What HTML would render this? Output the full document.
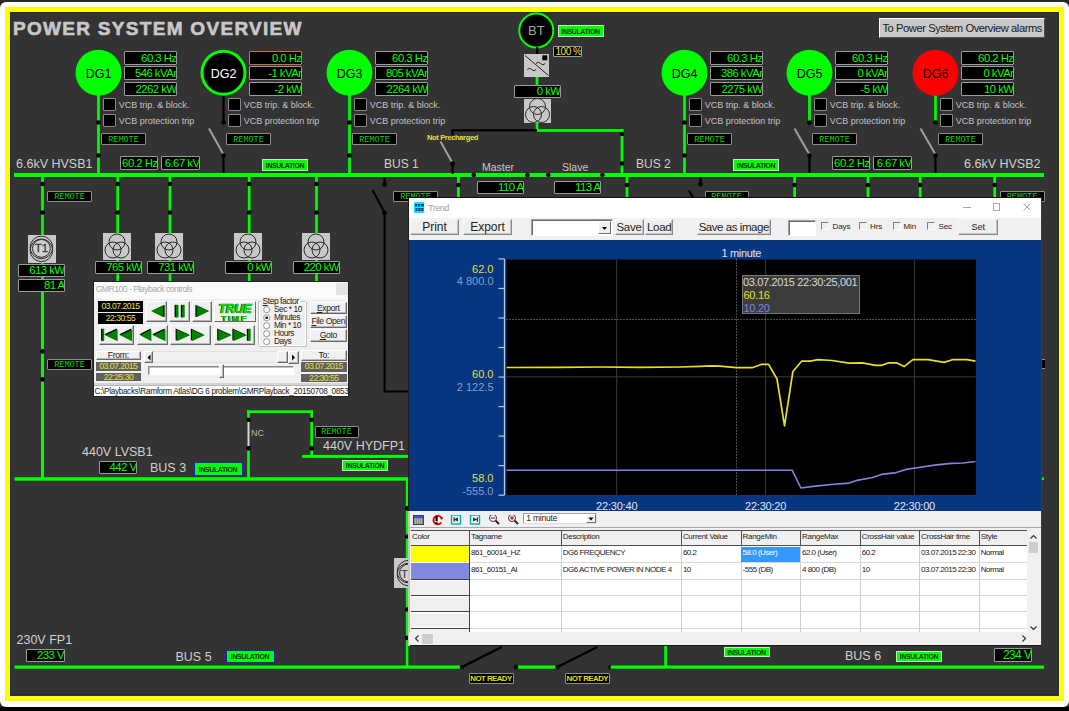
<!DOCTYPE html>
<html><head><meta charset="utf-8"><style>
*{margin:0;padding:0}
html,body{width:1069px;height:711px;overflow:hidden;background:#2a2a2a;font-family:"Liberation Sans", sans-serif}
#ov div{position:absolute;box-sizing:content-box}
#ov .vb{background:#000;border:1px solid #9a9a9a;border-radius:1px;text-align:right;overflow:hidden;white-space:pre}
#ov .rm{background:#000;border:1px solid #8c8c8c;border-radius:1px;font-family:'Liberation Mono',monospace;text-align:center;white-space:pre;overflow:hidden}
#ov .ins{background:#00ff00;border:1px solid #b8f0b8;font-size:7px;font-weight:bold;color:#1a301a;text-align:center;letter-spacing:-0.4px;white-space:pre;overflow:hidden}
</style></head><body>
<div style="position:absolute;left:0;top:707px;width:1069px;height:4px;background:#000"></div>
<div style="position:absolute;left:0;top:2px;width:1069px;height:705px;background:#fff;border-radius:6px"></div>
<div style="position:absolute;left:5.2px;top:7.2px;width:1048.7px;height:683.6px;border:5px solid #ffff00;background:#333"></div>
<div style="position:absolute;left:10.2px;top:12.2px;width:1045.8px;height:680.6px;border:1.5px solid #26263a;box-sizing:content-box"></div>
<div id="ov" style="position:absolute;left:0;top:0;width:1069px;height:711px">
<svg width="1069" height="711" style="position:absolute;left:0;top:0"><rect x="97.15" y="95" width="2.7" height="79" fill="#00ff00"/>
<circle cx="98.5" cy="122.5" r="2.3" fill="#000"/>
<circle cx="98.5" cy="155.5" r="2.3" fill="#000"/>
<circle cx="98.5" cy="72.8" r="23" fill="#00ff00"/>
<text x="98.5" y="78.1" font-size="12.5" text-anchor="middle" fill="#000" font-family="Liberation Sans">DG1</text>
<rect x="222.4" y="95" width="2.2" height="28" fill="#000"/>
<line x1="209" y1="128.5" x2="223.5" y2="154.5" stroke="#a0a0a0" stroke-width="2"/>
<rect x="222.4" y="155" width="2.2" height="19" fill="#000"/>
<circle cx="223.5" cy="122.5" r="2.3" fill="#000"/>
<circle cx="223.5" cy="155.5" r="2.3" fill="#000"/>
<circle cx="223.5" cy="72.8" r="21.5" fill="#000" stroke="#00ff00" stroke-width="3"/>
<text x="223.5" y="78.1" font-size="12.5" text-anchor="middle" fill="#fff" font-family="Liberation Sans">DG2</text>
<rect x="348.15" y="95" width="2.7" height="79" fill="#00ff00"/>
<circle cx="349.5" cy="122.5" r="2.3" fill="#000"/>
<circle cx="349.5" cy="155.5" r="2.3" fill="#000"/>
<circle cx="349.5" cy="72.8" r="23" fill="#00ff00"/>
<text x="349.5" y="78.1" font-size="12.5" text-anchor="middle" fill="#000" font-family="Liberation Sans">DG3</text>
<rect x="683.15" y="95" width="2.7" height="79" fill="#00ff00"/>
<circle cx="684.5" cy="122.5" r="2.3" fill="#000"/>
<circle cx="684.5" cy="155.5" r="2.3" fill="#000"/>
<circle cx="684.5" cy="72.8" r="23" fill="#00ff00"/>
<text x="684.5" y="78.1" font-size="12.5" text-anchor="middle" fill="#000" font-family="Liberation Sans">DG4</text>
<rect x="808.15" y="95" width="2.7" height="28" fill="#00ff00"/>
<line x1="794.5" y1="128.5" x2="809.5" y2="154.5" stroke="#a0a0a0" stroke-width="2"/>
<rect x="808.4" y="155" width="2.2" height="19" fill="#000"/>
<circle cx="809.5" cy="122.5" r="2.3" fill="#000"/>
<circle cx="809.5" cy="155.5" r="2.3" fill="#000"/>
<circle cx="809.5" cy="72.8" r="23" fill="#00ff00"/>
<text x="809.5" y="78.1" font-size="12.5" text-anchor="middle" fill="#000" font-family="Liberation Sans">DG5</text>
<rect x="934.15" y="95" width="2.7" height="28" fill="#00ff00"/>
<line x1="920.5" y1="128.5" x2="935.5" y2="154.5" stroke="#a0a0a0" stroke-width="2"/>
<rect x="934.4" y="155" width="2.2" height="19" fill="#000"/>
<circle cx="935.5" cy="122.5" r="2.3" fill="#000"/>
<circle cx="935.5" cy="155.5" r="2.3" fill="#000"/>
<circle cx="935.5" cy="72.8" r="23" fill="#ff0000"/>
<text x="935.5" y="78.1" font-size="12.5" text-anchor="middle" fill="#1a0000" font-family="Liberation Sans">DG6</text>
<rect x="14" y="173" width="1030" height="4" fill="#00ff00"/>
<circle cx="473.8" cy="175" r="2.3" fill="#000"/>
<circle cx="527.4" cy="175" r="2.3" fill="#000"/>
<circle cx="548.3" cy="175" r="2.3" fill="#000"/>
<circle cx="602.4" cy="175" r="2.3" fill="#000"/>
<circle cx="536.3" cy="30.5" r="17" fill="#000" stroke="#00ff00" stroke-width="2"/>
<text x="536.3" y="35.3" font-size="13" text-anchor="middle" fill="#a8a8a8" font-family="Liberation Sans">BT</text>
<rect x="536.0500000000001" y="47" width="2.3" height="7" fill="#000"/>
<rect x="535.65" y="76" width="2.7" height="10" fill="#00ff00"/>
<rect x="535.65" y="123" width="2.7" height="8" fill="#00ff00"/>
<rect x="537" y="129.15" width="86.5" height="2.7" fill="#00ff00"/>
<rect x="620.65" y="129" width="2.7" height="45" fill="#00ff00"/>
<circle cx="622" cy="134" r="2.3" fill="#000"/>
<circle cx="622" cy="163.5" r="2.3" fill="#000"/>
<rect x="451.5" y="129.20000000000002" width="85.5" height="2.2" fill="#000"/>
<rect x="451.4" y="129.5" width="2.2" height="5.5" fill="#000"/>
<line x1="440.5" y1="141.5" x2="452.8" y2="163.5" stroke="#a0a0a0" stroke-width="2"/>
<rect x="451.4" y="163" width="2.2" height="11" fill="#000"/>
<circle cx="452.5" cy="163.5" r="2.3" fill="#000"/>
<rect x="41.15" y="177" width="2.7" height="301" fill="#00ff00"/>
<circle cx="42.5" cy="184" r="2.3" fill="#000"/>
<circle cx="42.5" cy="212.5" r="2.3" fill="#000"/>
<rect x="116.35000000000001" y="177" width="2.7" height="104" fill="#00ff00"/>
<circle cx="117.7" cy="184" r="2.3" fill="#000"/>
<circle cx="117.7" cy="212.5" r="2.3" fill="#000"/>
<rect x="168.65" y="177" width="2.7" height="104" fill="#00ff00"/>
<circle cx="170" cy="184" r="2.3" fill="#000"/>
<circle cx="170" cy="212.5" r="2.3" fill="#000"/>
<rect x="247.85" y="177" width="2.7" height="104" fill="#00ff00"/>
<circle cx="249.2" cy="184" r="2.3" fill="#000"/>
<circle cx="249.2" cy="212.5" r="2.3" fill="#000"/>
<rect x="315.15" y="177" width="2.7" height="104" fill="#00ff00"/>
<circle cx="316.5" cy="184" r="2.3" fill="#000"/>
<circle cx="316.5" cy="212.5" r="2.3" fill="#000"/>
<rect x="41.15" y="281" width="2.7" height="197" fill="#00ff00"/>
<circle cx="42.5" cy="351.4" r="2.3" fill="#000"/>
<circle cx="42.5" cy="379.4" r="2.3" fill="#000"/>
<rect x="383.5" y="177" width="2.2" height="8" fill="#000"/>
<circle cx="384.6" cy="184.4" r="2.3" fill="#000"/>
<line x1="372.5" y1="190" x2="384.6" y2="212.7" stroke="#000" stroke-width="2"/>
<rect x="383.6" y="212.7" width="2" height="179.8" fill="#000"/>
<circle cx="384.6" cy="212.7" r="2.3" fill="#000"/>
<rect x="383.6" y="390.5" width="25.399999999999977" height="2" fill="#000"/>
<rect x="457.04999999999995" y="177" width="2.7" height="22" fill="#00ff00"/>
<circle cx="458.4" cy="185" r="2.3" fill="#000"/>
<rect x="625.65" y="177" width="2.7" height="22" fill="#00ff00"/>
<circle cx="627" cy="185" r="2.3" fill="#000"/>
<rect x="793.25" y="177" width="2.7" height="22" fill="#00ff00"/>
<circle cx="794.6" cy="185" r="2.3" fill="#000"/>
<rect x="866.65" y="177" width="2.7" height="22" fill="#00ff00"/>
<circle cx="868" cy="185" r="2.3" fill="#000"/>
<rect x="918.85" y="177" width="2.7" height="22" fill="#00ff00"/>
<circle cx="920.2" cy="185" r="2.3" fill="#000"/>
<rect x="993.35" y="177" width="2.7" height="22" fill="#00ff00"/>
<circle cx="994.7" cy="185" r="2.3" fill="#000"/>
<rect x="699.4" y="177" width="2.2" height="9" fill="#000"/>
<circle cx="700.5" cy="184.3" r="2.3" fill="#000"/>
<line x1="688.8" y1="190.5" x2="694" y2="199" stroke="#000" stroke-width="2"/>
<rect x="1040" y="477.45" width="4" height="2.7" fill="#00ff00"/>
<rect x="14.5" y="477.2" width="394" height="3.5" fill="#00ff00"/>
<rect x="247.15" y="410.5" width="2.7" height="10.5" fill="#00ff00"/>
<rect x="247.15" y="447" width="2.7" height="31" fill="#00ff00"/>
<rect x="247.5" y="422" width="2" height="24" fill="#d8d8d8"/>
<rect x="247" y="410.34999999999997" width="66" height="2.7" fill="#00ff00"/>
<rect x="310.34999999999997" y="410.5" width="2.7" height="45.5" fill="#00ff00"/>
<circle cx="248.5" cy="419.8" r="2.3" fill="#000"/>
<circle cx="248.5" cy="448.4" r="2.3" fill="#000"/>
<circle cx="311.7" cy="419.8" r="2.3" fill="#000"/>
<circle cx="311.7" cy="448.4" r="2.3" fill="#000"/>
<rect x="302" y="454.9" width="107" height="3" fill="#00ff00"/>
<rect x="405.85" y="478" width="2.5" height="190" fill="#00ff00"/>
<circle cx="407.2" cy="508.4" r="2.3" fill="#000"/>
<circle cx="407.2" cy="536.5" r="2.3" fill="#000"/>
<circle cx="407.2" cy="609.5" r="2.3" fill="#000"/>
<circle cx="407.2" cy="637.9" r="2.3" fill="#000"/>
<rect x="14.5" y="665.5" width="448" height="3.2" fill="#00ff00"/>
<circle cx="462" cy="667" r="2.3" fill="#000"/>
<line x1="462" y1="667" x2="501.8" y2="647" stroke="#000" stroke-width="2.5"/>
<rect x="516" y="665.5" width="41.5" height="3.2" fill="#00ff00"/>
<circle cx="516" cy="667" r="2.3" fill="#000"/>
<circle cx="557.4" cy="667" r="2.3" fill="#000"/>
<line x1="557.4" y1="667" x2="597.2" y2="647" stroke="#000" stroke-width="2.5"/>
<circle cx="610.6" cy="667" r="2.3" fill="#000"/>
<rect x="610.6" y="665.5" width="433.5" height="3.2" fill="#00ff00"/>
<rect x="664.25" y="646" width="2.7" height="21" fill="#00ff00"/></svg>
<div class="vb" style="left:124px;top:50.5px;width:51px;height:12px;border-color:#9a9a9a"><span style="position:absolute;right:-0.5px;top:0;line-height:12px;font-size:11.4px;color:#00ff00;letter-spacing:-0.55px">60.3 Hz</span></div>
<div class="vb" style="left:124px;top:66.3px;width:51px;height:12px;border-color:#9a9a9a"><span style="position:absolute;right:-0.5px;top:0;line-height:12px;font-size:11.4px;color:#00ff00;letter-spacing:-0.55px">546 kVAr</span></div>
<div class="vb" style="left:124px;top:82px;width:51px;height:12px;border-color:#9a9a9a"><span style="position:absolute;right:-0.5px;top:0;line-height:12px;font-size:11.4px;color:#00ff00;letter-spacing:-0.55px">2262 kW</span></div>
<div style="left:103px;top:97.6px;width:13px;height:13px;background:#000;border:1px solid #8a8a8a;box-sizing:border-box;border-radius:1px"></div>
<div style="left:103px;top:113.5px;width:13px;height:13px;background:#000;border:1px solid #8a8a8a;box-sizing:border-box;border-radius:1px"></div>
<div style="left:118.8px;top:98.5px;height:12px;line-height:12px;font-size:9px;color:#c4c4c4;white-space:pre;letter-spacing:0px">VCB trip. &amp; block.</div>
<div style="left:118.8px;top:114.5px;height:12px;line-height:12px;font-size:9px;color:#c4c4c4;white-space:pre;letter-spacing:0px">VCB protection trip</div>
<div class="rm" style="left:101px;top:133px;width:43px;height:10px;line-height:12px;color:#00d800;font-size:8.5px">REMOTE</div>
<div class="vb" style="left:249px;top:50.5px;width:51px;height:12px;border-color:#c87040"><span style="position:absolute;right:-0.5px;top:0;line-height:12px;font-size:11.4px;color:#00ff00;letter-spacing:-0.55px">0.0 Hz</span></div>
<div class="vb" style="left:249px;top:66.3px;width:51px;height:12px;border-color:#9a9a9a"><span style="position:absolute;right:-0.5px;top:0;line-height:12px;font-size:11.4px;color:#00ff00;letter-spacing:-0.55px">-1 kVAr</span></div>
<div class="vb" style="left:249px;top:82px;width:51px;height:12px;border-color:#9a9a9a"><span style="position:absolute;right:-0.5px;top:0;line-height:12px;font-size:11.4px;color:#00ff00;letter-spacing:-0.55px">-2 kW</span></div>
<div style="left:228px;top:97.6px;width:13px;height:13px;background:#000;border:1px solid #8a8a8a;box-sizing:border-box;border-radius:1px"></div>
<div style="left:228px;top:113.5px;width:13px;height:13px;background:#000;border:1px solid #8a8a8a;box-sizing:border-box;border-radius:1px"></div>
<div style="left:243.8px;top:98.5px;height:12px;line-height:12px;font-size:9px;color:#c4c4c4;white-space:pre;letter-spacing:0px">VCB trip. &amp; block.</div>
<div style="left:243.8px;top:114.5px;height:12px;line-height:12px;font-size:9px;color:#c4c4c4;white-space:pre;letter-spacing:0px">VCB protection trip</div>
<div class="rm" style="left:226px;top:133px;width:43px;height:10px;line-height:12px;color:#00d800;font-size:8.5px">REMOTE</div>
<div class="vb" style="left:375px;top:50.5px;width:51px;height:12px;border-color:#9a9a9a"><span style="position:absolute;right:-0.5px;top:0;line-height:12px;font-size:11.4px;color:#00ff00;letter-spacing:-0.55px">60.3 Hz</span></div>
<div class="vb" style="left:375px;top:66.3px;width:51px;height:12px;border-color:#9a9a9a"><span style="position:absolute;right:-0.5px;top:0;line-height:12px;font-size:11.4px;color:#00ff00;letter-spacing:-0.55px">805 kVAr</span></div>
<div class="vb" style="left:375px;top:82px;width:51px;height:12px;border-color:#9a9a9a"><span style="position:absolute;right:-0.5px;top:0;line-height:12px;font-size:11.4px;color:#00ff00;letter-spacing:-0.55px">2264 kW</span></div>
<div style="left:354px;top:97.6px;width:13px;height:13px;background:#000;border:1px solid #8a8a8a;box-sizing:border-box;border-radius:1px"></div>
<div style="left:354px;top:113.5px;width:13px;height:13px;background:#000;border:1px solid #8a8a8a;box-sizing:border-box;border-radius:1px"></div>
<div style="left:369.8px;top:98.5px;height:12px;line-height:12px;font-size:9px;color:#c4c4c4;white-space:pre;letter-spacing:0px">VCB trip. &amp; block.</div>
<div style="left:369.8px;top:114.5px;height:12px;line-height:12px;font-size:9px;color:#c4c4c4;white-space:pre;letter-spacing:0px">VCB protection trip</div>
<div class="rm" style="left:352px;top:133px;width:43px;height:10px;line-height:12px;color:#00d800;font-size:8.5px">REMOTE</div>
<div class="vb" style="left:710px;top:50.5px;width:51px;height:12px;border-color:#9a9a9a"><span style="position:absolute;right:-0.5px;top:0;line-height:12px;font-size:11.4px;color:#00ff00;letter-spacing:-0.55px">60.3 Hz</span></div>
<div class="vb" style="left:710px;top:66.3px;width:51px;height:12px;border-color:#9a9a9a"><span style="position:absolute;right:-0.5px;top:0;line-height:12px;font-size:11.4px;color:#00ff00;letter-spacing:-0.55px">386 kVAr</span></div>
<div class="vb" style="left:710px;top:82px;width:51px;height:12px;border-color:#9a9a9a"><span style="position:absolute;right:-0.5px;top:0;line-height:12px;font-size:11.4px;color:#00ff00;letter-spacing:-0.55px">2275 kW</span></div>
<div style="left:689px;top:97.6px;width:13px;height:13px;background:#000;border:1px solid #8a8a8a;box-sizing:border-box;border-radius:1px"></div>
<div style="left:689px;top:113.5px;width:13px;height:13px;background:#000;border:1px solid #8a8a8a;box-sizing:border-box;border-radius:1px"></div>
<div style="left:704.8px;top:98.5px;height:12px;line-height:12px;font-size:9px;color:#c4c4c4;white-space:pre;letter-spacing:0px">VCB trip. &amp; block.</div>
<div style="left:704.8px;top:114.5px;height:12px;line-height:12px;font-size:9px;color:#c4c4c4;white-space:pre;letter-spacing:0px">VCB protection trip</div>
<div class="rm" style="left:687px;top:133px;width:43px;height:10px;line-height:12px;color:#00d800;font-size:8.5px">REMOTE</div>
<div class="vb" style="left:835px;top:50.5px;width:51px;height:12px;border-color:#9a9a9a"><span style="position:absolute;right:-0.5px;top:0;line-height:12px;font-size:11.4px;color:#00ff00;letter-spacing:-0.55px">60.3 Hz</span></div>
<div class="vb" style="left:835px;top:66.3px;width:51px;height:12px;border-color:#9a9a9a"><span style="position:absolute;right:-0.5px;top:0;line-height:12px;font-size:11.4px;color:#00ff00;letter-spacing:-0.55px">0 kVAr</span></div>
<div class="vb" style="left:835px;top:82px;width:51px;height:12px;border-color:#9a9a9a"><span style="position:absolute;right:-0.5px;top:0;line-height:12px;font-size:11.4px;color:#00ff00;letter-spacing:-0.55px">-5 kW</span></div>
<div style="left:814px;top:97.6px;width:13px;height:13px;background:#000;border:1px solid #8a8a8a;box-sizing:border-box;border-radius:1px"></div>
<div style="left:814px;top:113.5px;width:13px;height:13px;background:#000;border:1px solid #8a8a8a;box-sizing:border-box;border-radius:1px"></div>
<div style="left:829.8px;top:98.5px;height:12px;line-height:12px;font-size:9px;color:#c4c4c4;white-space:pre;letter-spacing:0px">VCB trip. &amp; block.</div>
<div style="left:829.8px;top:114.5px;height:12px;line-height:12px;font-size:9px;color:#c4c4c4;white-space:pre;letter-spacing:0px">VCB protection trip</div>
<div class="rm" style="left:812px;top:133px;width:43px;height:10px;line-height:12px;color:#00d800;font-size:8.5px">REMOTE</div>
<div class="vb" style="left:961px;top:50.5px;width:51px;height:12px;border-color:#9a9a9a"><span style="position:absolute;right:-0.5px;top:0;line-height:12px;font-size:11.4px;color:#00ff00;letter-spacing:-0.55px">60.2 Hz</span></div>
<div class="vb" style="left:961px;top:66.3px;width:51px;height:12px;border-color:#9a9a9a"><span style="position:absolute;right:-0.5px;top:0;line-height:12px;font-size:11.4px;color:#00ff00;letter-spacing:-0.55px">0 kVAr</span></div>
<div class="vb" style="left:961px;top:82px;width:51px;height:12px;border-color:#9a9a9a"><span style="position:absolute;right:-0.5px;top:0;line-height:12px;font-size:11.4px;color:#00ff00;letter-spacing:-0.55px">10 kW</span></div>
<div style="left:940px;top:97.6px;width:13px;height:13px;background:#000;border:1px solid #8a8a8a;box-sizing:border-box;border-radius:1px"></div>
<div style="left:940px;top:113.5px;width:13px;height:13px;background:#000;border:1px solid #8a8a8a;box-sizing:border-box;border-radius:1px"></div>
<div style="left:955.8px;top:98.5px;height:12px;line-height:12px;font-size:9px;color:#c4c4c4;white-space:pre;letter-spacing:0px">VCB trip. &amp; block.</div>
<div style="left:955.8px;top:114.5px;height:12px;line-height:12px;font-size:9px;color:#c4c4c4;white-space:pre;letter-spacing:0px">VCB protection trip</div>
<div class="rm" style="left:938px;top:133px;width:43px;height:10px;line-height:12px;color:#00d800;font-size:8.5px">REMOTE</div>
<div style="left:16px;top:155.5px;height:16px;line-height:16px;font-size:12.5px;color:#d0d0d0;white-space:pre;">6.6kV HVSB1</div>
<div style="left:964px;top:155.5px;height:16px;line-height:16px;font-size:12.5px;color:#d0d0d0;white-space:pre;">6.6kV HVSB2</div>
<div class="vb" style="left:120px;top:156px;width:36px;height:12px;border-color:#9a9a9a"><span style="position:absolute;right:-0.5px;top:0;line-height:12px;font-size:11.4px;color:#00ff00;letter-spacing:-0.55px">60.2 Hz</span></div>
<div class="vb" style="left:161px;top:156px;width:37px;height:12px;border-color:#9a9a9a"><span style="position:absolute;right:-0.5px;top:0;line-height:12px;font-size:11.4px;color:#00ff00;letter-spacing:-0.55px">6.67 kV</span></div>
<div class="vb" style="left:832px;top:156px;width:36px;height:12px;border-color:#9a9a9a"><span style="position:absolute;right:-0.5px;top:0;line-height:12px;font-size:11.4px;color:#00ff00;letter-spacing:-0.55px">60.2 Hz</span></div>
<div class="vb" style="left:873px;top:156px;width:37px;height:12px;border-color:#9a9a9a"><span style="position:absolute;right:-0.5px;top:0;line-height:12px;font-size:11.4px;color:#00ff00;letter-spacing:-0.55px">6.67 kV</span></div>
<div class="ins" style="left:262px;top:158.5px;width:44px;height:10px;line-height:11px;border-color:#b8f0b8">INSULATION</div>
<div class="ins" style="left:733px;top:158.5px;width:44px;height:10px;line-height:11px;border-color:#b8f0b8">INSULATION</div>
<div style="left:384px;top:156.0px;height:16px;line-height:16px;font-size:12px;color:#d0d0d0;white-space:pre;">BUS 1</div>
<div style="left:636px;top:156.0px;height:16px;line-height:16px;font-size:12px;color:#d0d0d0;white-space:pre;">BUS 2</div>
<div style="left:482px;top:160.0px;height:14px;line-height:14px;font-size:10.5px;color:#c8c8c8;white-space:pre;">Master</div>
<div style="left:562px;top:160.0px;height:14px;line-height:14px;font-size:10.5px;color:#c8c8c8;white-space:pre;">Slave</div>
<div class="vb" style="left:477px;top:181px;width:45px;height:11px;border-color:#9a9a9a"><span style="position:absolute;right:-0.5px;top:0;line-height:11px;font-size:11.4px;color:#00ff00;letter-spacing:-0.55px">110 A</span></div>
<div class="vb" style="left:554px;top:181px;width:45px;height:11px;border-color:#9a9a9a"><span style="position:absolute;right:-0.5px;top:0;line-height:11px;font-size:11.4px;color:#00ff00;letter-spacing:-0.55px">113 A</span></div>
<div class="ins" style="left:557.5px;top:25px;width:44px;height:10px;line-height:11px;border-color:#b8f0b8">INSULATION</div>
<div class="vb" style="left:553.4px;top:46px;width:26.5px;height:9px;border-color:#9a9a9a"><span style="position:absolute;right:-0.5px;top:0;line-height:9px;font-size:10px;color:#f0e040;letter-spacing:-0.5px">100 %</span></div>
<div class="vb" style="left:514px;top:85px;width:45px;height:11px;border-color:#9a9a9a"><span style="position:absolute;right:-0.5px;top:0;line-height:11px;font-size:11.4px;color:#00ff00;letter-spacing:-0.55px">0 kW</span></div>
<div style="left:524px;top:54px;width:25px;height:23px;background:#c8c8c8"><svg width="25" height="23" style="position:absolute;left:0;top:0"><line x1="1" y1="1.5" x2="24.5" y2="21.5" stroke="#222" stroke-width="1"/><path d="M12 9.5 q2.3 -2.6 4.6 0 t4.6 0" fill="none" stroke="#222" stroke-width="1"/><path d="M3.3 15.5 q2.2 -2.6 4.4 0 t4.4 0" fill="none" stroke="#222" stroke-width="1"/><rect x="18.3" y="1.3" width="5" height="5" fill="#000"/></svg></div>
<div style="left:524px;top:99px;width:27px;height:24px;background:#c8c8c8"><svg width="27" height="24" style="position:absolute;left:0;top:0"><g fill="none" stroke="#2a2a2a" stroke-width="1"><circle cx="13.5" cy="7.5" r="8"/><circle cx="9.5" cy="15.5" r="8"/><circle cx="17.5" cy="15.5" r="8"/></g></svg></div>
<div style="left:427px;top:132.5px;height:10px;line-height:10px;font-size:7.5px;color:#e8e040;white-space:pre;font-weight:bold;letter-spacing:-0.35px">Not Precharged</div>
<div class="rm" style="left:47px;top:191px;width:43px;height:9px;line-height:11px;color:#00d800;font-size:8.5px">REMOTE</div>
<div class="rm" style="left:47px;top:359px;width:43px;height:9px;line-height:11px;color:#00d800;font-size:8.5px">REMOTE</div>
<div style="left:28.3px;top:235.2px;width:27.3px;height:27.8px;background:#c8c8c8"><svg width="27.3" height="27.8" style="position:absolute;left:0;top:0"><g fill="none" stroke="#2a2a2a" stroke-width="1"><circle cx="13.4" cy="12.4" r="11.3"/><circle cx="13.4" cy="15.3" r="11.3"/><circle cx="13.4" cy="13.4" r="8.9" fill="#d0d0d0"/></g><text x="13.4" y="17.4" font-size="11.5" text-anchor="middle" fill="#3a3a3a" font-family="Liberation Sans" stroke="#3a3a3a" stroke-width="0.3">T1</text></svg></div>
<div class="vb" style="left:18px;top:264px;width:45px;height:11px;border-color:#9a9a9a"><span style="position:absolute;right:-0.5px;top:0;line-height:11px;font-size:11.4px;color:#00ff00;letter-spacing:-0.55px">613 kW</span></div>
<div class="vb" style="left:18px;top:278.5px;width:45px;height:11px;border-color:#9a9a9a"><span style="position:absolute;right:-0.5px;top:0;line-height:11px;font-size:11.4px;color:#00ff00;letter-spacing:-0.55px">81 A</span></div>
<div style="left:103px;top:233px;width:28px;height:27px;background:#c8c8c8"><svg width="28" height="27" style="position:absolute;left:0;top:0"><g fill="none" stroke="#2a2a2a" stroke-width="1"><circle cx="14.0" cy="9.0" r="8"/><circle cx="10.0" cy="17.0" r="8"/><circle cx="18.0" cy="17.0" r="8"/></g></svg></div>
<div style="left:155.3px;top:233px;width:28px;height:27px;background:#c8c8c8"><svg width="28" height="27" style="position:absolute;left:0;top:0"><g fill="none" stroke="#2a2a2a" stroke-width="1"><circle cx="14.0" cy="9.0" r="8"/><circle cx="10.0" cy="17.0" r="8"/><circle cx="18.0" cy="17.0" r="8"/></g></svg></div>
<div style="left:234px;top:233px;width:28px;height:27px;background:#c8c8c8"><svg width="28" height="27" style="position:absolute;left:0;top:0"><g fill="none" stroke="#2a2a2a" stroke-width="1"><circle cx="14.0" cy="9.0" r="8"/><circle cx="10.0" cy="17.0" r="8"/><circle cx="18.0" cy="17.0" r="8"/></g></svg></div>
<div style="left:302px;top:233px;width:28px;height:27px;background:#c8c8c8"><svg width="28" height="27" style="position:absolute;left:0;top:0"><g fill="none" stroke="#2a2a2a" stroke-width="1"><circle cx="14.0" cy="9.0" r="8"/><circle cx="10.0" cy="17.0" r="8"/><circle cx="18.0" cy="17.0" r="8"/></g></svg></div>
<div class="vb" style="left:95px;top:261px;width:45px;height:11px;border-color:#9a9a9a"><span style="position:absolute;right:-0.5px;top:0;line-height:11px;font-size:11.4px;color:#00ff00;letter-spacing:-0.55px">765 kW</span></div>
<div class="vb" style="left:147px;top:261px;width:45px;height:11px;border-color:#9a9a9a"><span style="position:absolute;right:-0.5px;top:0;line-height:11px;font-size:11.4px;color:#00ff00;letter-spacing:-0.55px">731 kW</span></div>
<div class="vb" style="left:224.5px;top:261px;width:45px;height:11px;border-color:#9a9a9a"><span style="position:absolute;right:-0.5px;top:0;line-height:11px;font-size:11.4px;color:#00ff00;letter-spacing:-0.55px">0 kW</span></div>
<div class="vb" style="left:292.5px;top:261px;width:45px;height:11px;border-color:#9a9a9a"><span style="position:absolute;right:-0.5px;top:0;line-height:11px;font-size:11.4px;color:#00ff00;letter-spacing:-0.55px">220 kW</span></div>
<div class="rm" style="left:393px;top:191px;width:43px;height:9px;line-height:11px;color:#00d800;font-size:8.5px">REMOTE</div>
<div class="rm" style="left:704.5px;top:190.5px;width:42px;height:9px;line-height:11px;color:#00d800;font-size:8.5px">REMOTE</div>
<div class="rm" style="left:999.5px;top:191px;width:43px;height:9px;line-height:11px;color:#00d800;font-size:8.5px">REMOTE</div>
<div style="left:1041px;top:359px;width:4px;height:10px;background:#000;border:1px solid #9a9a9a;border-right:none;box-sizing:border-box"></div>
<div style="left:82px;top:444.3px;height:16px;line-height:16px;font-size:12.5px;color:#d0d0d0;white-space:pre;">440V LVSB1</div>
<div class="vb" style="left:99px;top:461px;width:36px;height:11px;border-color:#9a9a9a"><span style="position:absolute;right:-0.5px;top:0;line-height:11px;font-size:11.4px;color:#00ff00;letter-spacing:-0.55px">442 V</span></div>
<div style="left:150px;top:460.4px;height:16px;line-height:16px;font-size:12.5px;color:#d0d0d0;white-space:pre;">BUS 3</div>
<div class="ins" style="left:193.5px;top:462px;width:47px;height:12px;line-height:13px;border-color:#2020c0">INSULATION</div>
<div style="left:251px;top:426.7px;height:12px;line-height:12px;font-size:9px;color:#b8b8b8;white-space:pre;">NC</div>
<div class="rm" style="left:314.5px;top:426.3px;width:42px;height:9.5px;line-height:11.5px;color:#00d800;font-size:8.5px">REMOTE</div>
<div style="left:323px;top:437.6px;height:16px;line-height:16px;font-size:12.5px;color:#d0d0d0;white-space:pre;">440V HYDFP1</div>
<div class="ins" style="left:342px;top:460px;width:44px;height:9px;line-height:10px;border-color:#b8f0b8">INSULATION</div>
<div style="left:393.6px;top:558.2px;width:15px;height:30px;background:#c8c8c8;overflow:hidden"><svg width="30" height="30" style="position:absolute;left:0;top:0"><g fill="none" stroke="#2a2a2a" stroke-width="1"><circle cx="14.5" cy="13.6" r="11.3"/><circle cx="14.5" cy="16.5" r="11.3"/><circle cx="14.5" cy="15" r="8.9" fill="#d0d0d0"/></g><text x="10.5" y="19.5" font-size="11.5" text-anchor="middle" fill="#3a3a3a" font-family="Liberation Sans">T</text></svg></div>
<div style="left:16.5px;top:632.0px;height:16px;line-height:16px;font-size:12.5px;color:#d0d0d0;white-space:pre;">230V FP1</div>
<div class="vb" style="left:25.5px;top:648.5px;width:37px;height:11.5px;border-color:#9a9a9a"><span style="position:absolute;right:-0.5px;top:0;line-height:11.5px;font-size:11.4px;color:#00ff00;letter-spacing:-0.55px">233 V</span></div>
<div style="left:175.5px;top:648.8px;height:16px;line-height:16px;font-size:12.5px;color:#d0d0d0;white-space:pre;">BUS 5</div>
<div class="ins" style="left:225.5px;top:650.3px;width:47px;height:11px;line-height:12px;border-color:#2020c0">INSULATION</div>
<div class="rm" style="left:468.5px;top:672.5px;width:43px;height:9.5px;line-height:9.5px;color:#e0e000;font-family:Liberation Sans;font-weight:bold;font-size:7.8px;letter-spacing:-0.5px">NOT READY</div>
<div class="rm" style="left:564.8px;top:672.5px;width:43px;height:9.5px;line-height:9.5px;color:#e0e000;font-family:Liberation Sans;font-weight:bold;font-size:7.8px;letter-spacing:-0.5px">NOT READY</div>
<div class="ins" style="left:723.5px;top:647px;width:44px;height:8px;line-height:9px;border-color:#b8f0b8">INSULATION</div>
<div style="left:845px;top:648.2px;height:16px;line-height:16px;font-size:12.5px;color:#d0d0d0;white-space:pre;">BUS 6</div>
<div class="ins" style="left:896px;top:651px;width:44px;height:9px;line-height:10px;border-color:#b8f0b8">INSULATION</div>
<div class="vb" style="left:994px;top:648.3px;width:36px;height:12px;border-color:#9a9a9a"><span style="position:absolute;right:-0.5px;top:0;line-height:12px;font-size:12px;color:#00ff00;letter-spacing:-0.55px">234 V</span></div>
<div style="left:13px;top:15.9px;height:25px;line-height:25px;font-size:19px;color:#c8c8c8;white-space:pre;font-weight:bold;letter-spacing:1.3px;-webkit-text-stroke:0.6px #c8c8c8">POWER SYSTEM OVERVIEW</div>
<div style="left:879.4px;top:18.3px;width:165.6px;height:19.5px;background:#c8c8c8;box-sizing:border-box;border:1px solid;border-color:#fafafa #505050 #505050 #fafafa;font-size:11.2px;line-height:18px;text-align:center;color:#1a1a1a;letter-spacing:-0.45px;white-space:pre">To Power System Overview alarms</div>
</div>
<div style="position:absolute;left:93px;top:281px;width:256.2px;height:115.80000000000001px;overflow:hidden;font-family:'Liberation Sans',sans-serif"><div style="position:absolute;left:0.0px;top:0.0px;width:256.2px;height:115.8px;background:#f0f0f0;box-sizing:border-box;border:1px solid #222"></div>
<div style="position:absolute;left:1.0px;top:1.0px;width:254.2px;height:17.0px;background:#fbfbfb"></div>
<div style="position:absolute;left:2.7px;top:2.5px;height:11px;line-height:11px;font-size:8.6px;color:#a8a8a8;white-space:pre;letter-spacing:-0.5px">GMR100 - Playback controls</div>
<div style="position:absolute;left:243.3px;top:2.3px;width:11.4px;height:11.4px;background:#e4e4e4"></div>
<div style="position:absolute;left:5.0px;top:20.0px;width:45.0px;height:10.7px;background:#000;font-size:8.6px;line-height:10.7px;text-align:center;color:#e8e040;letter-spacing:-0.5px">03.07.2015</div>
<div style="position:absolute;left:5.0px;top:32.4px;width:45.0px;height:10.3px;background:#000;font-size:8.6px;line-height:10.3px;text-align:center;color:#e8e040;letter-spacing:-0.5px">22:30:55</div>
<div style="position:absolute;left:53.2px;top:19.8px;width:21.3px;height:20.8px;box-sizing:border-box;background:#f0f0f0;border:1px solid;border-color:#fff #6a6a6a #6a6a6a #fff;box-shadow:inset -1px -1px 0 #b8b8b8;"><svg width="21.30000000000001" height="20.80000000000001" style="position:absolute;left:-1px;top:-1px"><g transform="translate(-146.2,-300.8)"><polygon points="163.6,304.7 151.2,310.9 163.6,317.1" fill="#000" transform="translate(1.2,0)"/><polygon points="163.6,304.7 151.2,310.9 163.6,317.1" fill="#008000"/></g></svg></div>
<div style="position:absolute;left:76.4px;top:19.8px;width:21.1px;height:20.8px;box-sizing:border-box;background:#f0f0f0;border:1px solid;border-color:#fff #6a6a6a #6a6a6a #fff;box-shadow:inset -1px -1px 0 #b8b8b8;"><svg width="21.099999999999994" height="20.80000000000001" style="position:absolute;left:-1px;top:-1px"><g transform="translate(-169.4,-300.8)"><rect x="175.0" y="304.7" width="2.700000000000017" height="12.400000000000034" fill="#000"/><rect x="176.2" y="304.7" width="2.700000000000017" height="12.400000000000034" fill="#008000"/><rect x="181.20000000000002" y="304.7" width="2.6999999999999886" height="12.400000000000034" fill="#000"/><rect x="182.4" y="304.7" width="2.6999999999999886" height="12.400000000000034" fill="#008000"/></g></svg></div>
<div style="position:absolute;left:99.2px;top:19.8px;width:19.6px;height:20.8px;box-sizing:border-box;background:#f0f0f0;border:1px solid;border-color:#fff #6a6a6a #6a6a6a #fff;box-shadow:inset -1px -1px 0 #b8b8b8;"><svg width="19.600000000000023" height="20.80000000000001" style="position:absolute;left:-1px;top:-1px"><g transform="translate(-192.2,-300.8)"><polygon points="196.8,304.7 209.6,310.9 196.8,317.1" fill="#000" transform="translate(-1.2,0)"/><polygon points="196.8,304.7 209.6,310.9 196.8,317.1" fill="#008000"/></g></svg></div>
<div style="position:absolute;left:121.1px;top:19.8px;width:41.5px;height:20.8px;box-sizing:border-box;background:#f0f0f0;border:1px solid;border-color:#fff #6a6a6a #6a6a6a #fff;overflow:hidden"><div style="position:absolute;left:0px;top:2.5px;width:40px;text-align:center;font-size:12.5px;font-weight:bold;font-style:italic;color:#10f010;line-height:11px;letter-spacing:-0.3px;-webkit-text-stroke:0.5px #00b000;text-shadow:-1px 0 0 #003000">TRUE</div><div style="position:absolute;left:0;top:13.5px;width:40px;text-align:center;font-size:9px;font-weight:bold;color:#00d000;line-height:9px;letter-spacing:1.3px;text-shadow:-1px 0 0 #004000">TIME</div></div>
<div style="position:absolute;left:5.9px;top:44.0px;width:35.4px;height:20.1px;box-sizing:border-box;background:#f0f0f0;border:1px solid;border-color:#fff #6a6a6a #6a6a6a #fff;box-shadow:inset -1px -1px 0 #b8b8b8;"><svg width="35.400000000000006" height="20.100000000000023" style="position:absolute;left:-1px;top:-1px"><g transform="translate(-98.9,-325)"><rect x="101.6" y="328.9" width="2.4000000000000057" height="11.800000000000011" fill="#000"/><rect x="101.6" y="328.9" width="2.4000000000000057" height="11.800000000000011" fill="#008000"/><rect x="101" y="328.9" width="1.2" height="11.8" fill="#000"/><polygon points="117.5,329.4 105,335.29999999999995 117.5,341.2" fill="#000" transform="translate(-0.8,-1)"/><polygon points="117.5,329.4 105,335.29999999999995 117.5,341.2" fill="#008000"/><polygon points="132,329.4 120,335.29999999999995 132,341.2" fill="#000" transform="translate(-0.8,-1)"/><polygon points="132,329.4 120,335.29999999999995 132,341.2" fill="#008000"/></g></svg></div>
<div style="position:absolute;left:43.8px;top:44.0px;width:31.6px;height:20.1px;box-sizing:border-box;background:#f0f0f0;border:1px solid;border-color:#fff #6a6a6a #6a6a6a #fff;box-shadow:inset -1px -1px 0 #b8b8b8;"><svg width="31.599999999999994" height="20.100000000000023" style="position:absolute;left:-1px;top:-1px"><g transform="translate(-136.8,-325)"><polygon points="151.2,329.4 140,335.29999999999995 151.2,341.2" fill="#000" transform="translate(-0.8,-1)"/><polygon points="151.2,329.4 140,335.29999999999995 151.2,341.2" fill="#008000"/><polygon points="165.3,329.4 152.9,335.29999999999995 165.3,341.2" fill="#000" transform="translate(-0.8,-1)"/><polygon points="165.3,329.4 152.9,335.29999999999995 165.3,341.2" fill="#008000"/></g></svg></div>
<div style="position:absolute;left:77.4px;top:44.0px;width:40.9px;height:20.1px;box-sizing:border-box;background:#f0f0f0;border:1px solid;border-color:#fff #6a6a6a #6a6a6a #fff;box-shadow:inset -1px -1px 0 #b8b8b8;"><svg width="40.900000000000006" height="20.100000000000023" style="position:absolute;left:-1px;top:-1px"><g transform="translate(-170.4,-325)"><polygon points="177,329.4 190.5,335.29999999999995 177,341.2" fill="#000" transform="translate(-1,-0.8)"/><polygon points="177,329.4 190.5,335.29999999999995 177,341.2" fill="#008000"/><polygon points="192.2,329.4 205.1,335.29999999999995 192.2,341.2" fill="#000" transform="translate(-1,-0.8)"/><polygon points="192.2,329.4 205.1,335.29999999999995 192.2,341.2" fill="#008000"/></g></svg></div>
<div style="position:absolute;left:120.8px;top:44.0px;width:40.9px;height:20.1px;box-sizing:border-box;background:#f0f0f0;border:1px solid;border-color:#fff #6a6a6a #6a6a6a #fff;box-shadow:inset -1px -1px 0 #b8b8b8;"><svg width="40.89999999999998" height="20.100000000000023" style="position:absolute;left:-1px;top:-1px"><g transform="translate(-213.8,-325)"><polygon points="218,329.4 231.5,335.29999999999995 218,341.2" fill="#000" transform="translate(-1,-0.8)"/><polygon points="218,329.4 231.5,335.29999999999995 218,341.2" fill="#008000"/><polygon points="233.2,329.4 246.6,335.29999999999995 233.2,341.2" fill="#000" transform="translate(-1,-0.8)"/><polygon points="233.2,329.4 246.6,335.29999999999995 233.2,341.2" fill="#008000"/><rect x="246.60000000000002" y="328.9" width="2.6999999999999886" height="11.800000000000011" fill="#000"/><rect x="247.8" y="328.9" width="2.6999999999999886" height="11.800000000000011" fill="#008000"/></g></svg></div>
<div style="position:absolute;left:165.1px;top:19.5px;width:47.7px;height:45.4px;box-sizing:border-box;border:1px solid;border-color:#c0c0c0 #fff #fff #c0c0c0;box-shadow:inset 1px 1px 0 #fff, 1px 1px 0 #c0c0c0"></div>
<div style="position:absolute;left:168.0px;top:15.5px;width:40.0px;height:8.0px;background:#f0f0f0"></div>
<div style="position:absolute;left:169.5px;top:14.7px;height:11px;line-height:11px;font-size:8.5px;color:#222;white-space:pre;letter-spacing:-0.45px"><u>S</u>tep factor</div>
<svg style="position:absolute;left:169.8px;top:24.5px" width="8" height="8"><circle cx="3.7" cy="3.7" r="3" fill="#fff" stroke="#8a8a8a" stroke-width="0.9"/></svg>
<div style="position:absolute;left:180.9px;top:22.5px;height:11px;line-height:11px;font-size:8.4px;color:#222;white-space:pre;letter-spacing:-0.45px">Sec * 10</div>
<svg style="position:absolute;left:169.8px;top:32.5px" width="8" height="8"><circle cx="3.7" cy="3.7" r="3" fill="#fff" stroke="#8a8a8a" stroke-width="0.9"/><circle cx="3.7" cy="3.7" r="1.3" fill="#000"/></svg>
<div style="position:absolute;left:180.9px;top:30.5px;height:11px;line-height:11px;font-size:8.4px;color:#222;white-space:pre;letter-spacing:-0.45px">Minutes</div>
<svg style="position:absolute;left:169.8px;top:40.5px" width="8" height="8"><circle cx="3.7" cy="3.7" r="3" fill="#fff" stroke="#8a8a8a" stroke-width="0.9"/></svg>
<div style="position:absolute;left:180.9px;top:38.5px;height:11px;line-height:11px;font-size:8.4px;color:#222;white-space:pre;letter-spacing:-0.45px">Min * 10</div>
<svg style="position:absolute;left:169.8px;top:48.5px" width="8" height="8"><circle cx="3.7" cy="3.7" r="3" fill="#fff" stroke="#8a8a8a" stroke-width="0.9"/></svg>
<div style="position:absolute;left:180.9px;top:46.5px;height:11px;line-height:11px;font-size:8.4px;color:#222;white-space:pre;letter-spacing:-0.45px">Hours</div>
<svg style="position:absolute;left:169.8px;top:56.5px" width="8" height="8"><circle cx="3.7" cy="3.7" r="3" fill="#fff" stroke="#8a8a8a" stroke-width="0.9"/></svg>
<div style="position:absolute;left:180.9px;top:54.5px;height:11px;line-height:11px;font-size:8.4px;color:#222;white-space:pre;letter-spacing:-0.45px">Days</div>
<div style="position:absolute;left:216.8px;top:20.6px;width:36.9px;height:12.6px;box-sizing:border-box;background:#f0f0f0;border:1px solid;border-color:#fff #6a6a6a #6a6a6a #fff;box-shadow:inset -1px -1px 0 #b8b8b8;font-size:8.6px;line-height:11px;text-align:center;color:#222;letter-spacing:-0.4px;white-space:pre"><u>E</u>xport</div>
<div style="position:absolute;left:216.8px;top:34.4px;width:36.9px;height:12.8px;box-sizing:border-box;background:#f0f0f0;border:1px solid;border-color:#fff #6a6a6a #6a6a6a #fff;box-shadow:inset -1px -1px 0 #b8b8b8;font-size:8.6px;line-height:11px;text-align:center;color:#222;letter-spacing:-0.4px;white-space:pre"><u>F</u>ile Open</div>
<div style="position:absolute;left:216.8px;top:48.0px;width:36.9px;height:12.5px;box-sizing:border-box;background:#f0f0f0;border:1px solid;border-color:#fff #6a6a6a #6a6a6a #fff;box-shadow:inset -1px -1px 0 #b8b8b8;font-size:8.6px;line-height:11px;text-align:center;color:#222;letter-spacing:-0.4px;white-space:pre"><u>G</u>oto</div>
<div style="position:absolute;left:2.6px;top:69.8px;width:45.4px;height:9.4px;box-sizing:border-box;background:#f0f0f0;border:1px solid;border-color:#fff #6a6a6a #6a6a6a #fff;box-shadow:inset -1px -1px 0 #b8b8b8;font-size:8.6px;line-height:7.5px;text-align:center;color:#222;letter-spacing:-0.3px">From:</div>
<div style="position:absolute;left:2.6px;top:80.8px;width:45.4px;height:9.6px;background:#606060;font-size:9px;line-height:9.6px;text-align:center;color:#e8e040;letter-spacing:-0.5px;font-size:8.6px">03.07.2015</div>
<div style="position:absolute;left:3.0px;top:92.0px;width:45.0px;height:8.3px;background:#606060;font-size:9px;line-height:8.3px;text-align:center;color:#e8e040;letter-spacing:-0.5px;font-size:8.6px">22:25:30</div>
<div style="position:absolute;left:207.5px;top:69.0px;width:46.7px;height:10.7px;box-sizing:border-box;background:#f0f0f0;border:1px solid;border-color:#fff #6a6a6a #6a6a6a #fff;box-shadow:inset -1px -1px 0 #b8b8b8;font-size:8.6px;line-height:9px;text-align:center;color:#222;letter-spacing:-0.3px">To:</div>
<div style="position:absolute;left:208.0px;top:81.2px;width:45.7px;height:9.6px;background:#606060;font-size:9px;line-height:9.6px;text-align:center;color:#e8e040;letter-spacing:-0.5px;font-size:8.6px">03.07.2015</div>
<div style="position:absolute;left:208.0px;top:92.5px;width:45.7px;height:8.5px;background:#606060;font-size:9px;line-height:8.5px;text-align:center;color:#e8e040;letter-spacing:-0.5px;font-size:8.6px">22:30:55</div>
<div style="position:absolute;left:50.6px;top:69.6px;width:155.4px;height:12.6px;background:#f0f0f0;box-sizing:border-box;border:1px solid #e0e0e0"></div>
<div style="position:absolute;left:50.6px;top:69.6px;width:9.9px;height:12.6px;box-sizing:border-box;background:#f0f0f0;border:1px solid;border-color:#fff #6a6a6a #6a6a6a #fff;box-shadow:inset -1px -1px 0 #b8b8b8;"><svg width="8" height="10" style="position:absolute;left:0;top:0"><path d="M5.5 2.5 L2.5 5.5 L5.5 8.5 Z" fill="#000"/></svg></div>
<div style="position:absolute;left:184.0px;top:69.6px;width:11.0px;height:12.6px;box-sizing:border-box;background:#f0f0f0;border:1px solid;border-color:#fff #6a6a6a #6a6a6a #fff;box-shadow:inset -1px -1px 0 #b8b8b8;"></div>
<div style="position:absolute;left:195.0px;top:69.6px;width:11.0px;height:13.0px;box-sizing:border-box;background:#f0f0f0;border:1px solid;border-color:#fff #6a6a6a #6a6a6a #fff;box-shadow:inset -1px -1px 0 #b8b8b8;"><svg width="9" height="11" style="position:absolute;left:0;top:0"><path d="M3 2.5 L6 5.5 L3 8.5 Z" fill="#000"/></svg></div>
<div style="position:absolute;left:55.1px;top:85.0px;width:146.2px;height:9.0px;box-sizing:border-box;background:#fff;border:1px solid;border-color:#8a8a8a #fff #fff #8a8a8a;box-shadow:inset 1px 1px 0 #c0c0c0"></div>
<div style="position:absolute;left:125.9px;top:83.3px;width:5.6px;height:13.7px;box-sizing:border-box;background:#f0f0f0;border:1px solid;border-color:#fff #6a6a6a #6a6a6a #fff;box-shadow:inset -1px -1px 0 #b8b8b8;"></div>
<div style="position:absolute;left:0.6px;top:101.5px;width:254.7px;height:3.5px;background:#d4d4d4;border-bottom:1px solid #b8b8b8;box-sizing:border-box"></div>
<div style="position:absolute;left:0.6px;top:105.2px;width:254.7px;height:10.3px;background:#fff;font-size:8.2px;line-height:12.5px;color:#222;white-space:pre;overflow:hidden;letter-spacing:-0.33px;padding-left:1px;box-sizing:border-box">C:\Playbacks\Ramform Atlas\DG 6 problem\GMRPlayback_20150708_0853</div></div>
<div style="position:absolute;left:408px;top:197px;width:633.5px;height:449px;overflow:hidden;font-family:'Liberation Sans',sans-serif"><div style="position:absolute;left:0.0px;top:0.0px;width:633.5px;height:449.0px;background:#f0f0f0;box-sizing:border-box;border:1px solid #1c1c1c;border-top-color:#111;border-right-color:#3c3c3c"></div>
<div style="position:absolute;left:1.0px;top:1.0px;width:631.5px;height:19.5px;background:#fff"></div>
<div style="position:absolute;left:5.7px;top:5.0px;width:10.6px;height:10.6px;background:#00e8f8"><svg width="11" height="11" style="position:absolute;left:0;top:0"><g fill="#1040a0"><rect x="1" y="2" width="9" height="2.5"/><rect x="1.5" y="6" width="8" height="3"/></g><g fill="#00e8f8"><rect x="3" y="2.5" width="1" height="2"/><rect x="6" y="2.5" width="1" height="2"/><rect x="3" y="6.8" width="1.2" height="1.5"/><rect x="6.3" y="6.8" width="1.2" height="1.5"/></g></svg></div>
<div style="position:absolute;left:20.0px;top:5.0px;height:12px;line-height:12px;font-size:9px;color:#a0a0a0;white-space:pre;letter-spacing:-0.5px">Trend</div>
<div style="position:absolute;left:555.0px;top:9.8px;width:8.0px;height:1.0px;background:#a8a8a8"></div>
<div style="position:absolute;left:584.5px;top:6.3px;width:7.3px;height:7.3px;box-sizing:border-box;border:1px solid #a8a8a8"></div>
<svg style="position:absolute;left:614.5px;top:6px" width="8" height="8"><path d="M0.5 0.5 L7.5 7.5 M7.5 0.5 L0.5 7.5" stroke="#a0a0a0" stroke-width="1"/></svg>
<div style="position:absolute;left:2.0px;top:21.5px;width:49.0px;height:16.5px;box-sizing:border-box;background:#efefef;border:1px solid;border-color:#f8f8f8 #8a8a8a #8a8a8a #f8f8f8;box-shadow:inset -1px -1px 0 #c4c4c4;font-size:12px;line-height:14.5px;text-align:center;color:#222;letter-spacing:0px;white-space:pre">Print</div>
<div style="position:absolute;left:55.0px;top:21.5px;width:49.0px;height:16.5px;box-sizing:border-box;background:#efefef;border:1px solid;border-color:#f8f8f8 #8a8a8a #8a8a8a #f8f8f8;box-shadow:inset -1px -1px 0 #c4c4c4;font-size:12px;line-height:14.5px;text-align:center;color:#222;letter-spacing:0px;white-space:pre">Export</div>
<div style="position:absolute;left:122.5px;top:22.0px;width:82.0px;height:16.5px;box-sizing:border-box;background:#fff;border:1px solid;border-color:#a0a0a0 #fff #fff #a0a0a0;box-shadow:inset 1px 1px 0 #696969"></div>
<div style="position:absolute;left:190.0px;top:23.5px;width:13.0px;height:13.0px;box-sizing:border-box;background:#f0f0f0;border:1px solid;border-color:#fff #707070 #707070 #fff"><svg width="11" height="11" style="position:absolute;left:0;top:0"><path d="M3 5 L8 5 L5.5 8 Z" fill="#000"/></svg></div>
<div style="position:absolute;left:206.5px;top:21.5px;width:29.0px;height:16.5px;box-sizing:border-box;background:#efefef;border:1px solid;border-color:#f8f8f8 #8a8a8a #8a8a8a #f8f8f8;box-shadow:inset -1px -1px 0 #c4c4c4;font-size:11.5px;line-height:14.5px;text-align:center;color:#222;letter-spacing:-0.3px;white-space:pre">Save</div>
<div style="position:absolute;left:236.8px;top:21.5px;width:28.7px;height:16.5px;box-sizing:border-box;background:#efefef;border:1px solid;border-color:#f8f8f8 #8a8a8a #8a8a8a #f8f8f8;box-shadow:inset -1px -1px 0 #c4c4c4;font-size:11.5px;line-height:14.5px;text-align:center;color:#222;letter-spacing:-0.3px;white-space:pre">Load</div>
<div style="position:absolute;left:288.5px;top:21.5px;width:74.5px;height:16.5px;box-sizing:border-box;background:#efefef;border:1px solid;border-color:#f8f8f8 #8a8a8a #8a8a8a #f8f8f8;box-shadow:inset -1px -1px 0 #c4c4c4;font-size:11.5px;line-height:14.5px;text-align:center;color:#222;letter-spacing:-0.45px;white-space:pre">Save as image</div>
<div style="position:absolute;left:380.0px;top:23.0px;width:28.0px;height:15.5px;box-sizing:border-box;background:#fff;border:1px solid;border-color:#a0a0a0 #fff #fff #a0a0a0;box-shadow:inset 1px 1px 0 #696969"></div>
<div style="position:absolute;left:412.8px;top:24.5px;width:8.0px;height:8.0px;box-sizing:border-box;border:1px solid;border-color:#808080 #fff #fff #808080;background:#f0f0f0"></div>
<div style="position:absolute;left:424.5px;top:25.0px;height:10px;line-height:10px;font-size:8px;color:#222;white-space:pre;letter-spacing:-0.1px">Days</div>
<div style="position:absolute;left:451.0px;top:24.5px;width:8.0px;height:8.0px;box-sizing:border-box;border:1px solid;border-color:#808080 #fff #fff #808080;background:#f0f0f0"></div>
<div style="position:absolute;left:462.0px;top:25.0px;height:10px;line-height:10px;font-size:8px;color:#222;white-space:pre;letter-spacing:-0.1px">Hrs</div>
<div style="position:absolute;left:485.0px;top:24.5px;width:8.0px;height:8.0px;box-sizing:border-box;border:1px solid;border-color:#808080 #fff #fff #808080;background:#f0f0f0"></div>
<div style="position:absolute;left:495.5px;top:25.0px;height:10px;line-height:10px;font-size:8px;color:#222;white-space:pre;letter-spacing:-0.1px">Min</div>
<div style="position:absolute;left:519.0px;top:24.5px;width:8.0px;height:8.0px;box-sizing:border-box;border:1px solid;border-color:#808080 #fff #fff #808080;background:#f0f0f0"></div>
<div style="position:absolute;left:530.5px;top:25.0px;height:10px;line-height:10px;font-size:8px;color:#222;white-space:pre;letter-spacing:-0.1px">Sec</div>
<div style="position:absolute;left:550.3px;top:22.0px;width:39.7px;height:16.0px;box-sizing:border-box;background:#efefef;border:1px solid;border-color:#f8f8f8 #8a8a8a #8a8a8a #f8f8f8;box-shadow:inset -1px -1px 0 #c4c4c4;font-size:9px;line-height:14px;text-align:center;color:#222;letter-spacing:0px;white-space:pre">Set</div>
<div style="position:absolute;left:1.0px;top:42.5px;width:631.5px;height:271.5px;background:#05367f"></div>
<div style="position:absolute;left:293.3px;width:80px;text-align:center;top:48.6px;height:14px;line-height:14px;font-size:11px;color:#e0e6f4;white-space:pre;letter-spacing:-0.3px">1 minute</div>
<svg style="position:absolute;left:0;top:0" width="633.5" height="449"><rect x="98.5" y="62.5" width="469.5" height="235.5" fill="#000"/><line x1="208.70000000000005" y1="62.5" x2="208.70000000000005" y2="298" stroke="#3a3a3a" stroke-width="1"/><line x1="357.6" y1="62.5" x2="357.6" y2="298" stroke="#3a3a3a" stroke-width="1"/><line x1="506.4" y1="62.5" x2="506.4" y2="298" stroke="#3a3a3a" stroke-width="1"/><line x1="98.5" y1="179.8" x2="568" y2="179.8" stroke="#3a3a3a" stroke-width="1"/><line x1="98.5" y1="122.5" x2="568" y2="122.5" stroke="#9a9a9a" stroke-width="1" stroke-dasharray="1 2"/><line x1="328.5" y1="62.5" x2="328.5" y2="298" stroke="#9a9a9a" stroke-width="1" stroke-dasharray="1 2"/><line x1="96.5" y1="61.89999999999998" x2="96.5" y2="298.2" stroke="#b8c4dc" stroke-width="1.3"/><line x1="90.5" y1="61.89999999999998" x2="96.5" y2="61.89999999999998" stroke="#b8c4dc" stroke-width="1.2"/><line x1="90.5" y1="91.4375" x2="96.5" y2="91.4375" stroke="#b8c4dc" stroke-width="1.2"/><line x1="90.5" y1="120.97499999999997" x2="96.5" y2="120.97499999999997" stroke="#b8c4dc" stroke-width="1.2"/><line x1="90.5" y1="150.5125" x2="96.5" y2="150.5125" stroke="#b8c4dc" stroke-width="1.2"/><line x1="90.5" y1="180.04999999999995" x2="96.5" y2="180.04999999999995" stroke="#b8c4dc" stroke-width="1.2"/><line x1="90.5" y1="209.58749999999998" x2="96.5" y2="209.58749999999998" stroke="#b8c4dc" stroke-width="1.2"/><line x1="90.5" y1="239.125" x2="96.5" y2="239.125" stroke="#b8c4dc" stroke-width="1.2"/><line x1="90.5" y1="268.6625" x2="96.5" y2="268.6625" stroke="#b8c4dc" stroke-width="1.2"/><line x1="90.5" y1="298.2" x2="96.5" y2="298.2" stroke="#b8c4dc" stroke-width="1.2"/><polyline points="98.5,170.5 152.0,170.3 192.0,170.0 232.0,170.4 272.0,170.0 292.0,169.4 304.0,168.9 312.0,169.2 328.3,170.7 344.3,170.7 353.8,167.3 360.6,167.3 369.0,182.0 376.5,228.8 384.9,174.5 393.6,164.2 402.4,164.2 410.0,162.7 424.0,163.5 441.0,166.1 454.4,165.8 467.7,168.4 473.4,168.4 481.0,165.8 488.5,165.8 496.1,169.6 504.9,162.7 520.0,162.7 536.0,165.4 544.3,162.7 558.8,162.7 567.5,164.2" fill="none" stroke="#e6e020" stroke-width="1.7" stroke-linejoin="round"/><polyline points="98.5,273.2 384.1,273.2 392.9,291.0 407.0,289.1 425.9,287.2 441.0,286.1 448.7,283.4 463.9,280.8 473.4,277.4 486.6,275.9 498.0,272.4 505.6,271.3 528.4,267.9 543.6,266.4 555.0,266.0 567.5,264.5" fill="none" stroke="#8484e0" stroke-width="1.6" stroke-linejoin="round"/></svg>
<div style="position:absolute;left:35.5px;width:50px;text-align:right;top:64.5px;height:14px;line-height:14px;font-size:11px;color:#e0e040;white-space:pre;">62.0</div>
<div style="position:absolute;left:35.5px;width:50px;text-align:right;top:77.0px;height:14px;line-height:14px;font-size:11px;color:#8c9ccc;white-space:pre;">4 800.0</div>
<div style="position:absolute;left:35.5px;width:50px;text-align:right;top:170.0px;height:14px;line-height:14px;font-size:11px;color:#e0e040;white-space:pre;">60.0</div>
<div style="position:absolute;left:35.5px;width:50px;text-align:right;top:183.0px;height:14px;line-height:14px;font-size:11px;color:#8c9ccc;white-space:pre;">2 122.5</div>
<div style="position:absolute;left:35.5px;width:50px;text-align:right;top:274.3px;height:14px;line-height:14px;font-size:11px;color:#e0e040;white-space:pre;">58.0</div>
<div style="position:absolute;left:35.5px;width:50px;text-align:right;top:287.0px;height:14px;line-height:14px;font-size:11px;color:#8c9ccc;white-space:pre;">-555.0</div>
<div style="position:absolute;left:178.7px;width:60px;text-align:center;top:302.0px;height:14px;line-height:14px;font-size:11px;color:#e0e6f4;white-space:pre;letter-spacing:-0.2px">22:30:40</div>
<div style="position:absolute;left:327.6px;width:60px;text-align:center;top:302.0px;height:14px;line-height:14px;font-size:11px;color:#e0e6f4;white-space:pre;letter-spacing:-0.2px">22:30:20</div>
<div style="position:absolute;left:476.4px;width:60px;text-align:center;top:302.0px;height:14px;line-height:14px;font-size:11px;color:#e0e6f4;white-space:pre;letter-spacing:-0.2px">22:30:00</div>
<div style="position:absolute;left:334.0px;top:77.7px;width:117.7px;height:39.1px;box-sizing:border-box;background:#3c3c3c;border:1px solid #7a7a7a"></div>
<div style="position:absolute;left:335.0px;top:78.0px;height:14px;line-height:14px;font-size:11px;color:#d8d8d8;white-space:pre;letter-spacing:-0.35px">03.07.2015 22:30:25,001</div>
<div style="position:absolute;left:335.5px;top:91.2px;height:14px;line-height:14px;font-size:11px;color:#e0e020;white-space:pre;letter-spacing:-0.3px">60.16</div>
<div style="position:absolute;left:335.5px;top:104.0px;height:14px;line-height:14px;font-size:11px;color:#8080e0;white-space:pre;letter-spacing:-0.3px">10.20</div>
<div style="position:absolute;left:1.0px;top:314.0px;width:631.5px;height:18.0px;background:#f0f0f0"></div>
<div style="position:absolute;left:1.0px;top:330.0px;width:631.5px;height:1.2px;background:#a8a8a8"></div>
<div style="position:absolute;left:5.0px;top:317.5px;width:120.0px;height:12.0px;"><svg width="120" height="12" style="position:absolute;left:0;top:0"><rect x="0.5" y="0.5" width="10" height="9" fill="#8a8a8a" stroke="#404040" stroke-width="1"/><rect x="1" y="1" width="9" height="2.2" fill="#3858c8"/><line x1="2.5" y1="3.5" x2="2.5" y2="9" stroke="#d0d0d0" stroke-width="0.6"/><line x1="4.5" y1="3.5" x2="4.5" y2="9" stroke="#d0d0d0" stroke-width="0.6"/><line x1="6.5" y1="3.5" x2="6.5" y2="9" stroke="#d0d0d0" stroke-width="0.6"/><line x1="8.5" y1="3.5" x2="8.5" y2="9" stroke="#d0d0d0" stroke-width="0.6"/><path d="M28.5 3 A4.3 4.3 0 1 0 28.3 7.5" fill="none" stroke="#e00000" stroke-width="1.8"/><path d="M27 1.2 L30.5 2.8 L28 5 Z" fill="#e00000"/><rect x="22.5" y="1.2" width="2.2" height="5" fill="#000"/><rect x="22.5" y="7.3" width="2.2" height="1.7" fill="#000"/><g transform="translate(-4.5,0)"><rect x="43" y="0" width="9" height="9" fill="#f4f4f4" stroke="#00b0b0" stroke-width="1.4"/><path d="M49.5 2.5 L45 4.5 L49.5 6.5 Z" fill="#333"/><rect x="45" y="2.2" width="1.2" height="4.6" fill="#333"/></g><g transform="translate(-4.5,0)"><rect x="62" y="0" width="9" height="9" fill="#f4f4f4" stroke="#00b0b0" stroke-width="1.4"/><path d="M64.5 2.5 L69 4.5 L64.5 6.5 Z" fill="#333"/><rect x="68.3" y="2.2" width="1.2" height="4.6" fill="#333"/></g><g transform="translate(-4,-1)"><circle cx="84" cy="4" r="3.5" fill="#fff" stroke="#333" stroke-width="1"/><line x1="82" y1="4" x2="86" y2="4" stroke="#d00" stroke-width="1.2"/><line x1="86.5" y1="6.5" x2="90" y2="10" stroke="#222" stroke-width="1.8"/></g><g transform="translate(-4,-1)"><circle cx="103" cy="4" r="3.5" fill="#fff" stroke="#333" stroke-width="1"/><line x1="101" y1="4" x2="105" y2="4" stroke="#d00" stroke-width="1.2"/><line x1="103" y1="2" x2="103" y2="6" stroke="#d00" stroke-width="1.2"/><line x1="105.5" y1="6.5" x2="109" y2="10" stroke="#222" stroke-width="1.8"/></g></svg></div>
<div style="position:absolute;left:115.3px;top:316.3px;width:73.7px;height:11.0px;box-sizing:border-box;background:#fff;border:1px solid;border-color:#a0a0a0 #e0e0e0 #e0e0e0 #a0a0a0;font-size:8.5px;line-height:9px;padding-left:2px;color:#222;letter-spacing:-0.2px">1 minute</div>
<div style="position:absolute;left:178.0px;top:317.3px;width:10.0px;height:9.0px;box-sizing:border-box;background:#f0f0f0;border:1px solid;border-color:#fff #707070 #707070 #fff"><svg width="8" height="7" style="position:absolute;left:0;top:0"><path d="M1.5 2.5 L6.5 2.5 L4 5.5 Z" fill="#000"/></svg></div>
<div style="position:absolute;left:1.0px;top:332.0px;width:631.5px;height:116.0px;background:#f0f0f0"></div>
<div style="position:absolute;left:0.3px;top:314.0px;width:1.8px;height:135.0px;background:#c4c4c4"></div>
<div style="position:absolute;left:2.5px;top:349.2px;width:616.8px;height:86.2px;background:#fff"></div>
<div style="position:absolute;left:2.5px;top:332.7px;width:616.8px;height:16.5px;background:#f0f0f0;border-top:1.3px solid #505050;box-sizing:border-box"></div>
<div style="position:absolute;left:2.5px;top:348.2px;width:616.8px;height:1.2px;background:#505050"></div>
<div style="position:absolute;left:4.0px;top:334.8px;height:10px;line-height:10px;font-size:8px;color:#222;white-space:pre;letter-spacing:-0.3px">Color</div>
<div style="position:absolute;left:63.0px;top:334.8px;height:10px;line-height:10px;font-size:8px;color:#222;white-space:pre;letter-spacing:-0.3px">Tagname</div>
<div style="position:absolute;left:154.8px;top:334.8px;height:10px;line-height:10px;font-size:8px;color:#222;white-space:pre;letter-spacing:-0.3px">Description</div>
<div style="position:absolute;left:274.9px;top:334.8px;height:10px;line-height:10px;font-size:8px;color:#222;white-space:pre;letter-spacing:-0.3px">Current Value</div>
<div style="position:absolute;left:334.6px;top:334.8px;height:10px;line-height:10px;font-size:8px;color:#222;white-space:pre;letter-spacing:-0.3px">RangeMin</div>
<div style="position:absolute;left:394.0px;top:334.8px;height:10px;line-height:10px;font-size:8px;color:#222;white-space:pre;letter-spacing:-0.3px">RangeMax</div>
<div style="position:absolute;left:453.7px;top:334.8px;height:10px;line-height:10px;font-size:8px;color:#222;white-space:pre;letter-spacing:-0.3px">CrossHair value</div>
<div style="position:absolute;left:513.1px;top:334.8px;height:10px;line-height:10px;font-size:8px;color:#222;white-space:pre;letter-spacing:-0.3px">CrossHair time</div>
<div style="position:absolute;left:572.8px;top:334.8px;height:10px;line-height:10px;font-size:8px;color:#222;white-space:pre;letter-spacing:-0.3px">Style</div>
<div style="position:absolute;left:61.5px;top:365.3px;width:557.8px;height:1.0px;background:#d8d8d8"></div>
<div style="position:absolute;left:61.5px;top:381.9px;width:557.8px;height:1.0px;background:#d8d8d8"></div>
<div style="position:absolute;left:61.5px;top:398.2px;width:557.8px;height:1.0px;background:#d8d8d8"></div>
<div style="position:absolute;left:61.5px;top:414.4px;width:557.8px;height:1.0px;background:#d8d8d8"></div>
<div style="position:absolute;left:61.5px;top:430.8px;width:557.8px;height:1.0px;background:#d8d8d8"></div>
<div style="position:absolute;left:61.0px;top:332.7px;width:1.0px;height:102.7px;background:#d0d0d0"></div>
<div style="position:absolute;left:152.8px;top:332.7px;width:1.0px;height:102.7px;background:#d0d0d0"></div>
<div style="position:absolute;left:272.9px;top:332.7px;width:1.0px;height:102.7px;background:#d0d0d0"></div>
<div style="position:absolute;left:332.6px;top:332.7px;width:1.0px;height:102.7px;background:#d0d0d0"></div>
<div style="position:absolute;left:392.0px;top:332.7px;width:1.0px;height:102.7px;background:#d0d0d0"></div>
<div style="position:absolute;left:451.7px;top:332.7px;width:1.0px;height:102.7px;background:#d0d0d0"></div>
<div style="position:absolute;left:511.1px;top:332.7px;width:1.0px;height:102.7px;background:#d0d0d0"></div>
<div style="position:absolute;left:570.8px;top:332.7px;width:1.0px;height:102.7px;background:#d0d0d0"></div>
<div style="position:absolute;left:60.9px;top:333.0px;width:1.1px;height:16.0px;background:#505050"></div>
<div style="position:absolute;left:152.7px;top:333.0px;width:1.1px;height:16.0px;background:#505050"></div>
<div style="position:absolute;left:272.8px;top:333.0px;width:1.1px;height:16.0px;background:#505050"></div>
<div style="position:absolute;left:332.5px;top:333.0px;width:1.1px;height:16.0px;background:#505050"></div>
<div style="position:absolute;left:391.9px;top:333.0px;width:1.1px;height:16.0px;background:#505050"></div>
<div style="position:absolute;left:451.6px;top:333.0px;width:1.1px;height:16.0px;background:#505050"></div>
<div style="position:absolute;left:511.0px;top:333.0px;width:1.1px;height:16.0px;background:#505050"></div>
<div style="position:absolute;left:570.7px;top:333.0px;width:1.1px;height:16.0px;background:#505050"></div>
<div style="position:absolute;left:2.5px;top:349.3px;width:59.0px;height:15.9px;background:#ffff00"></div>
<div style="position:absolute;left:2.5px;top:365.8px;width:59.0px;height:16.0px;background:#8088e0"></div>
<div style="position:absolute;left:2.5px;top:383.0px;width:59.0px;height:14.7px;background:#efefef;border-top:1px solid #fff;box-sizing:border-box"></div>
<div style="position:absolute;left:2.5px;top:399.3px;width:59.0px;height:14.6px;background:#efefef;border-top:1px solid #fff;box-sizing:border-box"></div>
<div style="position:absolute;left:2.5px;top:415.5px;width:59.0px;height:14.8px;background:#efefef;border-top:1px solid #fff;box-sizing:border-box"></div>
<div style="position:absolute;left:2.5px;top:381.6px;width:59.0px;height:1.2px;background:#404040"></div>
<div style="position:absolute;left:2.5px;top:397.9px;width:59.0px;height:1.2px;background:#404040"></div>
<div style="position:absolute;left:2.5px;top:414.1px;width:59.0px;height:1.2px;background:#404040"></div>
<div style="position:absolute;left:2.5px;top:430.5px;width:59.0px;height:1.2px;background:#404040"></div>
<div style="position:absolute;left:2.5px;top:431.9px;width:59.0px;height:4.0px;background:#efefef"></div>
<div style="position:absolute;left:61.0px;top:349.0px;width:1.3px;height:86.5px;background:#404040"></div>
<div style="position:absolute;left:333.3px;top:349.6px;width:59.0px;height:15.7px;background:#3399ff"></div>
<div style="position:absolute;left:63.0px;top:350.0px;width:89.8px;height:12px;line-height:12px;font-size:8px;color:#222;white-space:pre;overflow:hidden;letter-spacing:-0.5px">861_60014_HZ</div>
<div style="position:absolute;left:154.8px;top:350.0px;width:118.1px;height:12px;line-height:12px;font-size:8px;color:#222;white-space:pre;overflow:hidden;letter-spacing:-0.5px">DG6 FREQUENCY</div>
<div style="position:absolute;left:274.9px;top:350.0px;width:57.7px;height:12px;line-height:12px;font-size:8px;color:#222;white-space:pre;overflow:hidden;letter-spacing:-0.5px">60.2</div>
<div style="position:absolute;left:334.6px;top:350.0px;width:57.4px;height:12px;line-height:12px;font-size:8px;color:#fff;white-space:pre;overflow:hidden;letter-spacing:-0.5px">58.0 (User)</div>
<div style="position:absolute;left:394.0px;top:350.0px;width:57.7px;height:12px;line-height:12px;font-size:8px;color:#222;white-space:pre;overflow:hidden;letter-spacing:-0.5px">62.0 (User)</div>
<div style="position:absolute;left:453.7px;top:350.0px;width:57.4px;height:12px;line-height:12px;font-size:8px;color:#222;white-space:pre;overflow:hidden;letter-spacing:-0.5px">60.2</div>
<div style="position:absolute;left:513.1px;top:350.0px;width:57.7px;height:12px;line-height:12px;font-size:8px;color:#222;white-space:pre;overflow:hidden;letter-spacing:-0.5px">03.07.2015 22:30</div>
<div style="position:absolute;left:572.8px;top:350.0px;width:46.0px;height:12px;line-height:12px;font-size:8px;color:#222;white-space:pre;overflow:hidden;letter-spacing:-0.5px">Normal</div>
<div style="position:absolute;left:63.0px;top:366.6px;width:89.8px;height:12px;line-height:12px;font-size:8px;color:#222;white-space:pre;overflow:hidden;letter-spacing:-0.5px">861_60151_AI</div>
<div style="position:absolute;left:154.8px;top:366.6px;width:118.1px;height:12px;line-height:12px;font-size:8px;color:#222;white-space:pre;overflow:hidden;letter-spacing:-0.5px">DG6 ACTIVE POWER IN NODE 4</div>
<div style="position:absolute;left:274.9px;top:366.6px;width:57.7px;height:12px;line-height:12px;font-size:8px;color:#222;white-space:pre;overflow:hidden;letter-spacing:-0.5px">10</div>
<div style="position:absolute;left:334.6px;top:366.6px;width:57.4px;height:12px;line-height:12px;font-size:8px;color:#222;white-space:pre;overflow:hidden;letter-spacing:-0.5px">-555 (DB)</div>
<div style="position:absolute;left:394.0px;top:366.6px;width:57.7px;height:12px;line-height:12px;font-size:8px;color:#222;white-space:pre;overflow:hidden;letter-spacing:-0.5px">4 800 (DB)</div>
<div style="position:absolute;left:453.7px;top:366.6px;width:57.4px;height:12px;line-height:12px;font-size:8px;color:#222;white-space:pre;overflow:hidden;letter-spacing:-0.5px">10</div>
<div style="position:absolute;left:513.1px;top:366.6px;width:57.7px;height:12px;line-height:12px;font-size:8px;color:#222;white-space:pre;overflow:hidden;letter-spacing:-0.5px">03.07.2015 22:30</div>
<div style="position:absolute;left:572.8px;top:366.6px;width:46.0px;height:12px;line-height:12px;font-size:8px;color:#222;white-space:pre;overflow:hidden;letter-spacing:-0.5px">Normal</div>
<div style="position:absolute;left:619.3px;top:332.7px;width:12.7px;height:102.7px;background:#f0f0f0"></div>
<svg style="position:absolute;left:621px;top:336px" width="10" height="8"><path d="M1.5 5.5 L4.5 2.5 L7.5 5.5" fill="none" stroke="#333" stroke-width="1.2"/></svg>
<div style="position:absolute;left:621.0px;top:345.0px;width:9.0px;height:10.7px;background:#cdcdcd"></div>
<svg style="position:absolute;left:621px;top:427px" width="10" height="8"><path d="M1.5 2.5 L4.5 5.5 L7.5 2.5" fill="none" stroke="#333" stroke-width="1.2"/></svg>
<div style="position:absolute;left:1.0px;top:435.4px;width:631.5px;height:13.0px;background:#f0f0f0"></div>
<svg style="position:absolute;left:5px;top:437px" width="8" height="10"><path d="M5.5 1.5 L2.5 4.5 L5.5 7.5" fill="none" stroke="#333" stroke-width="1.2"/></svg>
<div style="position:absolute;left:13.9px;top:437.1px;width:10.7px;height:9.6px;background:#cdcdcd"></div>
<svg style="position:absolute;left:612px;top:437px" width="8" height="10"><path d="M2.5 1.5 L5.5 4.5 L2.5 7.5" fill="none" stroke="#333" stroke-width="1.2"/></svg></div>
</body></html>
